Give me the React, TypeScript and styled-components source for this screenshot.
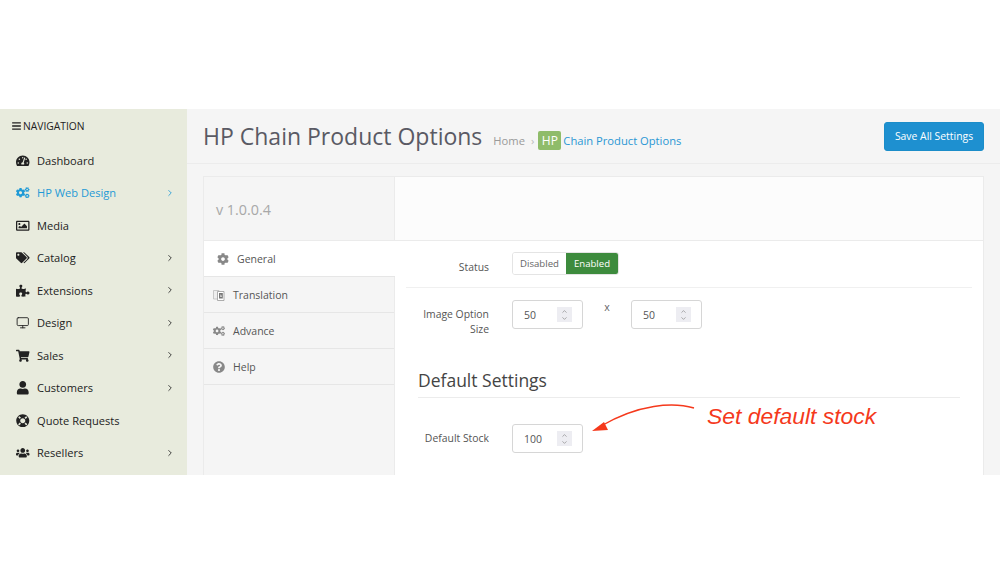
import React from "react";
import styled, { createGlobalStyle } from "styled-components";
import {
  FaBars,
  FaCog,
  FaCogs,
  FaLifeRing,
  FaPuzzlePiece,
  FaQuestionCircle,
  FaRegImage,
  FaShoppingCart,
  FaTachometerAlt,
  FaTags,
  FaUser,
  FaUsers,
} from "react-icons/fa";
import { ChevronDown, ChevronRight, ChevronUp, Monitor } from "lucide-react";

const GlobalStyle = createGlobalStyle`
  html, body {
    margin: 0;
    padding: 0;
    background: #fff;
    font-family: "Open Sans", "Liberation Sans", sans-serif;
  }
  * {
    box-sizing: border-box;
  }
`;

const TranslateIcon = () => (
  <svg viewBox="0 0 12 12">
    <path d="M.5 1.5h5.5v8.5H.5z" fill="#eee" stroke="#bbb" strokeWidth=".8" />
    <path d="M4.5 2.5h6.5v9H4.5z" fill="#fff" stroke="#999" strokeWidth=".8" />
    <path d="M6 4h3.8v5.5H6z" fill="#777" />
    <path d="M7.9 5l-1 3h.7l.3-1 .3 1h.7z" fill="#eee" />
  </svg>
);

const NAV_ITEMS = [
  { label: "Dashboard", icon: <FaTachometerAlt /> },
  { label: "HP Web Design", icon: <FaCogs />, arrow: true, active: true },
  { label: "Media", icon: <FaRegImage /> },
  { label: "Catalog", icon: <FaTags />, arrow: true },
  { label: "Extensions", icon: <FaPuzzlePiece />, arrow: true },
  { label: "Design", icon: <Monitor strokeWidth={1.6} />, arrow: true },
  { label: "Sales", icon: <FaShoppingCart />, arrow: true },
  { label: "Customers", icon: <FaUser />, arrow: true },
  { label: "Quote Requests", icon: <FaLifeRing /> },
  { label: "Resellers", icon: <FaUsers />, arrow: true },
];

const TABS = [
  { label: "General", icon: <FaCog />, active: true },
  { label: "Translation", icon: <TranslateIcon /> },
  { label: "Advance", icon: <FaCogs /> },
  { label: "Help", icon: <FaQuestionCircle /> },
];

const NumberBox = ({ value }: { value: number }) => (
  <NumberField>
    {value}
    <Spinner>
      <ChevronUp strokeWidth={2} />
      <ChevronDown strokeWidth={2} />
    </Spinner>
  </NumberField>
);

const App = () => {
  return (
    <>
      <GlobalStyle />
      <Frame>
        <Sidebar>
          <NavTitle>
            <FaBars />
            NAVIGATION
          </NavTitle>
          <NavList>
            {NAV_ITEMS.map((item) => (
              <NavItem key={item.label} $active={item.active}>
                <NavIcon>{item.icon}</NavIcon>
                <NavLabel>{item.label}</NavLabel>
                {item.arrow && <ChevronRight strokeWidth={2} />}
              </NavItem>
            ))}
          </NavList>
        </Sidebar>
        <Main>
          <PageHeader>
            <Title>HP Chain Product Options</Title>
            <Crumbs>
              <CrumbHome>Home</CrumbHome>
              <CrumbSep>›</CrumbSep>
              <LogoBadge>HP</LogoBadge>
              <CrumbLink>Chain Product Options</CrumbLink>
            </Crumbs>
            <SaveButton>Save All Settings</SaveButton>
          </PageHeader>
          <Content>
            <Card>
              <CardTop>
                <Version>v 1.0.0.4</Version>
                <TopFill />
              </CardTop>
              <CardBody>
                <Tabs>
                  {TABS.map((tab) => (
                    <Tab key={tab.label} $active={tab.active}>
                      {tab.icon}
                      {tab.label}
                    </Tab>
                  ))}
                </Tabs>
                <Panel>
                  <StatusRow>
                    <StatusLabel>Status</StatusLabel>
                    <Toggle>
                      <ToggleOption>Disabled</ToggleOption>
                      <ToggleOption $on>Enabled</ToggleOption>
                    </Toggle>
                  </StatusRow>
                  <SizeRow>
                    <FieldLabel>Image Option Size</FieldLabel>
                    <NumberBox value={50} />
                    <Times>x</Times>
                    <NumberBox value={50} />
                  </SizeRow>
                  <SectionTitle>Default Settings</SectionTitle>
                  <StockRow>
                    <FieldLabel>Default Stock</FieldLabel>
                    <NumberBox value={100} />
                  </StockRow>
                </Panel>
              </CardBody>
            </Card>
          </Content>
        </Main>
        <Callout>
          <CalloutArrow viewBox="0 0 106 32" fill="none">
            <path d="M103 7C82 1 48 3 10 25" stroke="#f5391c" strokeWidth="1.4" />
            <path d="M1 30L13 21L17 29Z" fill="#f5391c" />
          </CalloutArrow>
          <CalloutText>Set default stock</CalloutText>
        </Callout>
      </Frame>
    </>
  );
};

const Frame = styled.div`
  position: relative;
  display: flex;
  width: 1000px;
  height: 366px;
  margin-top: 109px;
  overflow: hidden;
`;

const Sidebar = styled.aside`
  width: 187px;
  flex: none;
  background: #e8ebdd;
  color: #1f1f1f;
`;

const NavTitle = styled.div`
  display: flex;
  align-items: center;
  gap: 2px;
  height: 33px;
  padding-left: 12px;
  font-size: 10.3px;
  color: #222;
  svg {
    width: 9px;
    height: 10px;
  }
`;

const NavList = styled.nav`
  display: flex;
  flex-direction: column;
  margin-top: 2px;
`;

const NavItem = styled.div<{ $active?: boolean }>`
  display: flex;
  align-items: center;
  height: 32.5px;
  padding: 0 12px 0 16px;
  font-size: 11.1px;
  color: ${(p) => (p.$active ? "#1f9ad6" : "#222")};
  > svg {
    width: 10px;
    height: 10px;
  }
`;

const NavIcon = styled.span`
  display: flex;
  align-items: center;
  width: 21px;
  font-size: 13px;
  svg {
    width: 13.5px;
    height: 13.5px;
  }
`;

const NavLabel = styled.span`
  flex: 1;
`;

const Main = styled.main`
  flex: 1;
  min-width: 0;
  background: #f5f5f5;
`;

const PageHeader = styled.header`
  display: flex;
  align-items: center;
  height: 55px;
  padding: 0 16px;
  border-bottom: 1px solid #ececec;
`;

const Title = styled.h1`
  margin: 0;
  font-size: 23px;
  font-weight: 400;
  color: #5a5a64;
  white-space: nowrap;
`;

const Crumbs = styled.div`
  display: flex;
  align-items: center;
  flex: 1;
  margin: 9px 0 0 11px;
  font-size: 11.2px;
`;

const CrumbHome = styled.span`
  color: #9a9a9a;
`;

const CrumbSep = styled.span`
  margin: 0 4px 0 6px;
  color: #bbb;
`;

const LogoBadge = styled.span`
  display: flex;
  align-items: center;
  justify-content: center;
  width: 23px;
  height: 19px;
  margin-right: 2px;
  border-radius: 2px;
  background: #8fbc6a;
  color: #fff;
  font-size: 12px;
`;

const CrumbLink = styled.span`
  color: #2a97d4;
`;

const SaveButton = styled.button`
  width: 100px;
  height: 29px;
  padding: 0;
  border: 1px solid #1b8dc9;
  border-radius: 3px;
  background: #1e90d0;
  color: #fff;
  font: 400 10.4px "Open Sans", sans-serif;
  white-space: nowrap;
`;

const Content = styled.div`
  padding: 12px 16px 0;
`;

const Card = styled.section`
  height: 320px;
  background: #fff;
  border: 1px solid #ebebeb;
`;

const CardTop = styled.div`
  display: flex;
  height: 64px;
  background: #fcfcfc;
  border-bottom: 1px solid #ebebeb;
`;

const Version = styled.div`
  display: flex;
  align-items: center;
  width: 191px;
  padding: 2px 0 0 12px;
  border-right: 1px solid #ebebeb;
  background: #f5f5f5;
  font-size: 14.3px;
  color: #a8a8a8;
`;

const TopFill = styled.div`
  flex: 1;
`;

const CardBody = styled.div`
  display: flex;
  height: 255px;
`;

const Tabs = styled.div`
  width: 191px;
  flex: none;
  background: #f5f5f5;
  border-right: 1px solid #ebebeb;
`;

const Tab = styled.div<{ $active?: boolean }>`
  display: flex;
  align-items: center;
  gap: 8px;
  height: 36px;
  padding-left: ${(p) => (p.$active ? "13px" : "9px")};
  margin-right: ${(p) => (p.$active ? "-1px" : "0")};
  background: ${(p) => (p.$active ? "#fff" : "transparent")};
  border-bottom: 1px solid #e6e6e6;
  font-size: 10.5px;
  color: #555;
  svg {
    width: 12px;
    height: 12px;
    color: #888;
  }
`;

const Panel = styled.div`
  flex: 1;
  padding: 0 11px;
`;

const FieldLabel = styled.div`
  width: 83px;
  flex: none;
  text-align: right;
  font-size: 10.4px;
  line-height: 15px;
  color: #555;
`;

const StatusLabel = styled(FieldLabel)`
  margin-top: 6px;
`;

const StatusRow = styled.div`
  display: flex;
  align-items: center;
  gap: 23px;
  height: 47px;
  border-bottom: 1px solid #f0f0f0;
`;

const Toggle = styled.div`
  display: flex;
  height: 23px;
  margin-top: -1px;
  border: 1px solid #e4e4e4;
  border-radius: 3px;
  overflow: hidden;
`;

const ToggleOption = styled.span<{ $on?: boolean }>`
  display: flex;
  align-items: center;
  justify-content: center;
  width: ${(p) => (p.$on ? "52px" : "53px")};
  background: ${(p) => (p.$on ? "#3d8b3d" : "#fff")};
  color: ${(p) => (p.$on ? "#fff" : "#666")};
  font-size: 9.6px;
`;

const SizeRow = styled.div`
  display: flex;
  align-items: flex-start;
  gap: 23px;
  padding-top: 12px;
  ${FieldLabel} {
    margin-top: 7px;
  }
`;

const NumberField = styled.div`
  display: flex;
  align-items: center;
  justify-content: space-between;
  width: 71px;
  height: 29px;
  padding: 0 10px 0 11px;
  border: 1px solid #d6d6d6;
  border-radius: 3px;
  background: #fff;
  font-size: 10.5px;
  color: #555;
`;

const Spinner = styled.span`
  display: flex;
  flex-direction: column;
  align-items: center;
  justify-content: center;
  width: 15px;
  height: 15px;
  background: #ededf2;
  color: #777;
  svg {
    width: 9px;
    height: 7px;
  }
`;

const Times = styled.span`
  width: 48px;
  margin: 0 -23px;
  font-size: 10.5px;
  color: #666;
  text-align: center;
`;

const SectionTitle = styled.h2`
  margin: 31px 12px 0;
  padding: 0 0 5px;
  font-size: 17.5px;
  font-weight: 400;
  line-height: 24px;
  color: #444;
  border-bottom: 1px solid #ececec;
`;

const StockRow = styled.div`
  display: flex;
  align-items: center;
  gap: 23px;
  margin-top: 26px;
`;

const Callout = styled.div`
  position: absolute;
  left: 591px;
  top: 292px;
  display: flex;
  align-items: flex-start;
`;

const CalloutArrow = styled.svg`
  width: 106px;
  height: 32px;
  flex: none;
`;

const CalloutText = styled.span`
  margin: 2px 0 0 10px;
  font: italic 400 22.9px "Liberation Sans", Arial, sans-serif;
  color: #f5391c;
  white-space: nowrap;
`;

export default App;
